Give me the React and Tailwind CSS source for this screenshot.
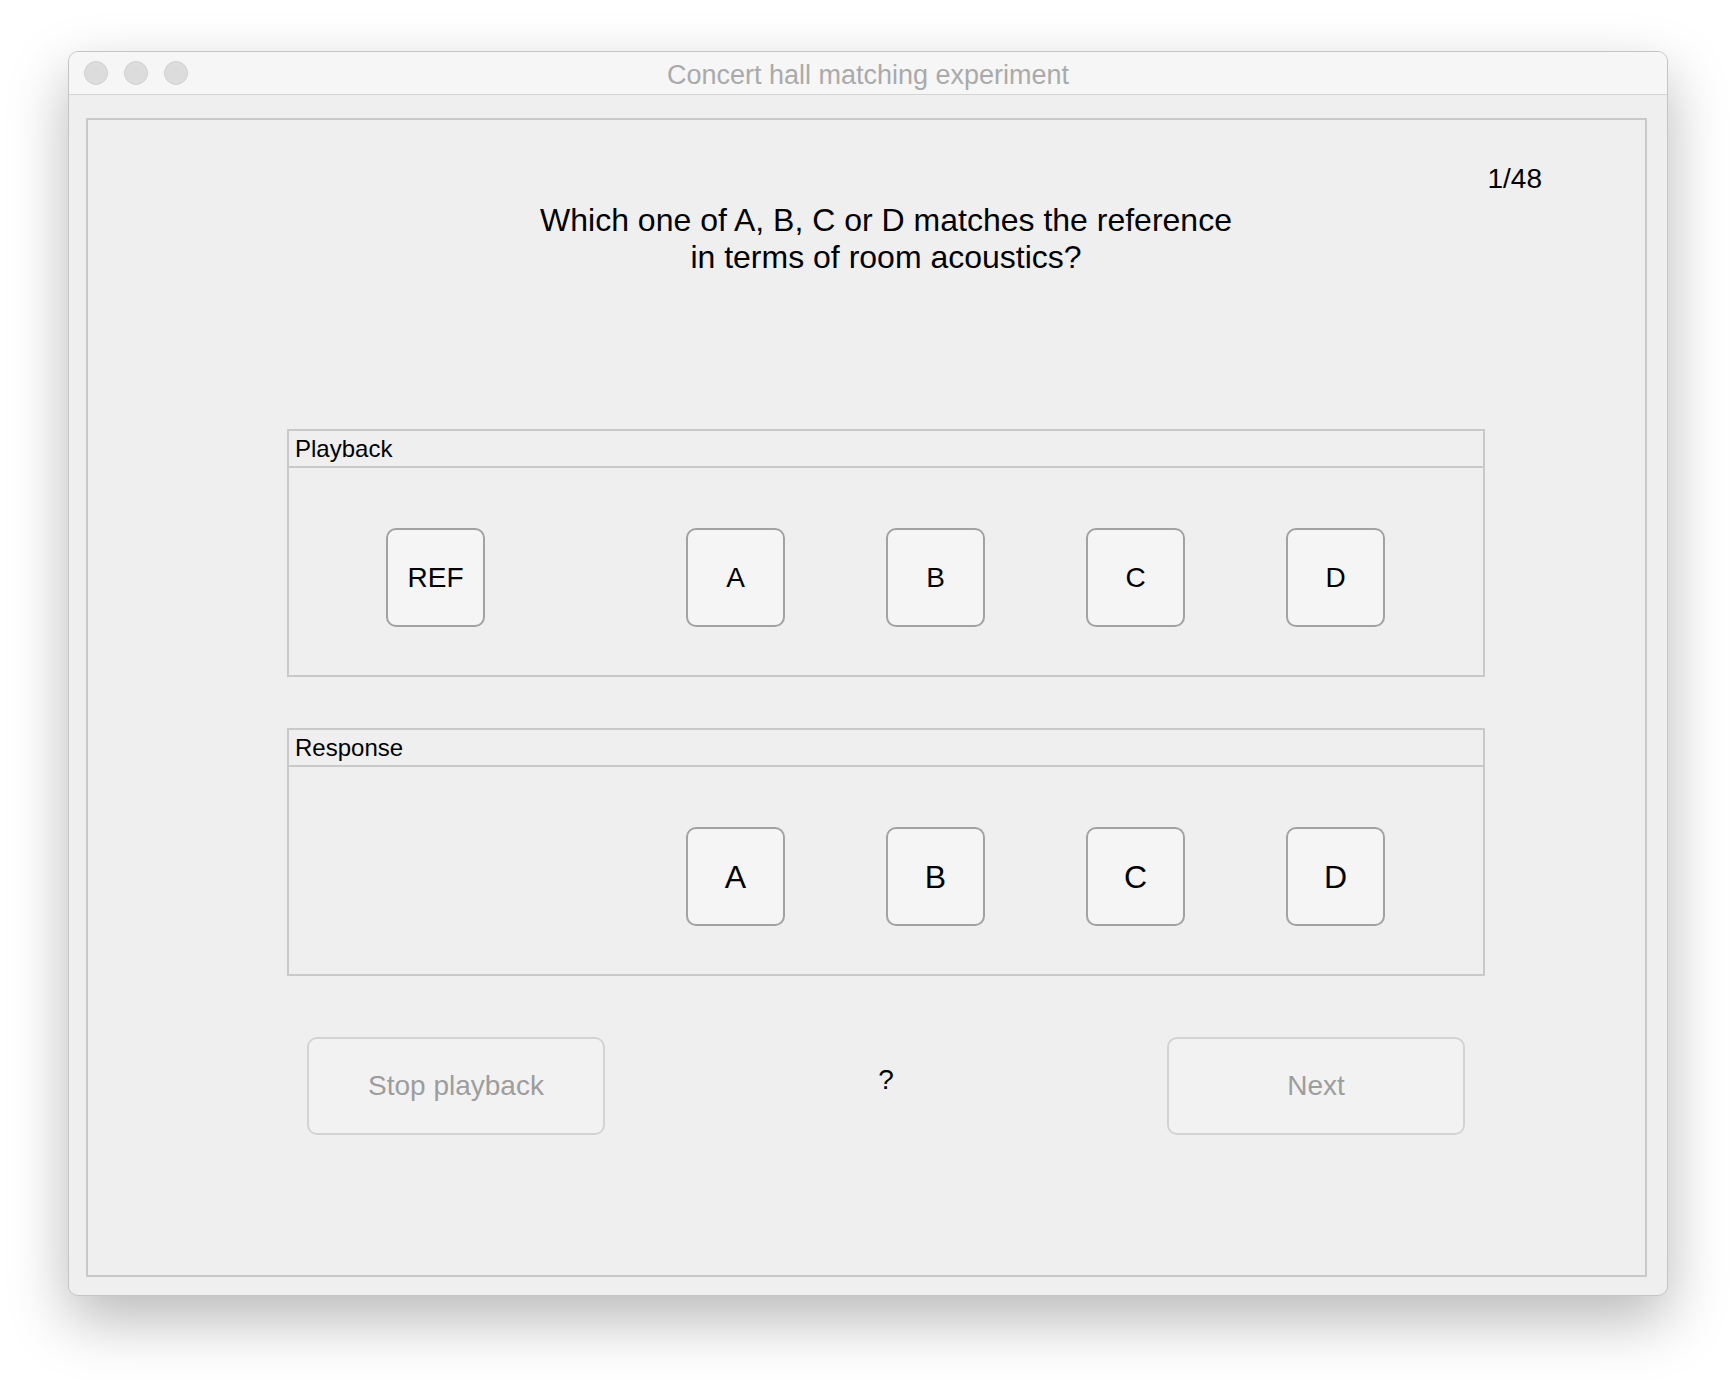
const font = { fontFamily: '"Liberation Sans", Arial, Helvetica, sans-serif' }

// ─── Square sound button ──────────────────────────────────────────────────────
function SoundButton({ label, big = false }) {
  return (
    <button
      className={`w-[99px] h-[99px] shrink-0 rounded-[10px] border-2 border-[#a2a2a2] bg-[#f5f5f5] text-black flex items-center justify-center ${
        big ? 'text-[32px]' : 'text-[28px]'
      }`}
    >
      {label}
    </button>
  )
}

// ─── Group box with a title strip ─────────────────────────────────────────────
function GroupBox({ title, children, className = '' }) {
  return (
    <div className={`border-2 border-[#c9c9c9] ${className}`}>
      <div className="h-[37px] border-b-2 border-[#c9c9c9] flex items-center pl-[6px] text-[24px] leading-none text-black">
        {title}
      </div>
      <div className="h-[207px] pt-[60px]">{children}</div>
    </div>
  )
}

function DisabledButton({ label }) {
  return (
    <button className="w-[298px] h-[98px] rounded-[10px] border-2 border-[#d3d3d3] bg-[#f2f2f2] text-[28px] text-[#9d9d9d]">
      {label}
    </button>
  )
}

export default function App() {
  return (
    <div className="w-[1736px] h-[1380px] bg-white pl-[68px] pt-[51px]" style={font}>
      {/* Window */}
      <div className="w-[1600px] h-[1245px] rounded-[10px] border border-[#c4c4c4] bg-[#efefef] overflow-hidden shadow-[0_24px_60px_rgba(0,0,0,0.28)]">
        {/* Title bar */}
        <div className="h-[43px] bg-[#f6f6f6] border-b border-[#d4d4d4] flex items-center relative">
          <div className="flex gap-[16px] pl-[15px]">
            <span className="w-[24px] h-[24px] rounded-full bg-[#dcdcdc] border border-[#d0d0d0]" />
            <span className="w-[24px] h-[24px] rounded-full bg-[#dcdcdc] border border-[#d0d0d0]" />
            <span className="w-[24px] h-[24px] rounded-full bg-[#dcdcdc] border border-[#d0d0d0]" />
          </div>
          <div className="absolute inset-0 flex items-center justify-center pt-[4px] text-[27px] text-[#aaaaaa] leading-none">
            Concert hall matching experiment
          </div>
        </div>

        {/* Content panel */}
        <div className="ml-[17px] mt-[23px] w-[1561px] h-[1159px] border-2 border-[#c9c9c9]">
          <div className="flex justify-end pr-[103px] pt-[43px] text-[28px] leading-[32px] text-black">1/48</div>

          <div className="ml-[199px] w-[1198px]">
            <div className="mt-[7px] text-center text-[32px] leading-[37px] text-black">
              Which one of A, B, C or D matches the reference
              <br />
              in terms of room acoustics?
            </div>

            <GroupBox title="Playback" className="mt-[153px]">
              <div className="flex pl-[97px]">
                <SoundButton label="REF" />
                <div className="flex gap-[101px] ml-[201px]">
                  <SoundButton label="A" />
                  <SoundButton label="B" />
                  <SoundButton label="C" />
                  <SoundButton label="D" />
                </div>
              </div>
            </GroupBox>

            <GroupBox title="Response" className="mt-[51px]">
              <div className="flex gap-[101px] pl-[397px]">
                <SoundButton label="A" big />
                <SoundButton label="B" big />
                <SoundButton label="C" big />
                <SoundButton label="D" big />
              </div>
            </GroupBox>

            <div className="mt-[61px] flex items-center justify-between px-[20px]">
              <DisabledButton label="Stop playback" />
              <div className="text-[28px] text-black pb-[12px]">?</div>
              <DisabledButton label="Next" />
            </div>
          </div>
        </div>
      </div>
    </div>
  )
}
